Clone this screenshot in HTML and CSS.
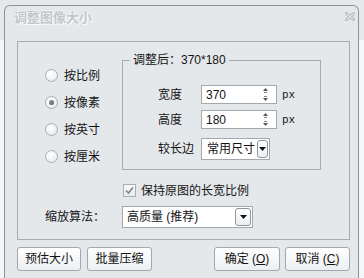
FILE: index.html
```html
<!DOCTYPE html>
<html lang="zh-CN">
<head>
<meta charset="utf-8">
<title>调整图像大小</title>
<link rel="stylesheet" href="styles.css">
</head>
<body>
<div class="window">
  <div class="titlebar">
    <span class="title">调整图像大小</span>
    <svg class="close" width="10" height="9" viewBox="0 0 10 9">
      <path d="M1.5 1.5 L8.5 7.5 M8.5 1.5 L1.5 7.5" stroke="#b9bdc1" stroke-width="3" stroke-linecap="square" fill="none"/>
      <path d="M1.5 1.5 L8.5 7.5 M8.5 1.5 L1.5 7.5" stroke="#f4f5f6" stroke-width="1" fill="none"/>
    </svg>
  </div>
  <div class="group">
    <div class="top">
      <div class="radios">
        <div class="radio"><span class="rb"></span><span>按比例</span></div>
        <div class="radio"><span class="rb on"></span><span>按像素</span></div>
        <div class="radio"><span class="rb"></span><span>按英寸</span></div>
        <div class="radio"><span class="rb"></span><span>按厘米</span></div>
      </div>
      <div class="after">
        <span class="legend">调整后：370*180</span>
        <div class="row">
          <span class="lbl">宽度</span>
          <div class="spin"><span class="val">370</span>
            <svg class="arrows" width="7" height="15" viewBox="0 0 7 15">
              <path d="M3.5 1 L6 4 L1 4 Z" fill="#555"/>
              <rect x="2" y="5" width="3" height="1" fill="#888"/>
              <rect x="2" y="9" width="3" height="1" fill="#888"/>
              <path d="M1 11 L6 11 L3.5 14 Z" fill="#555"/>
            </svg>
          </div>
          <span class="unit">px</span>
        </div>
        <div class="row r2">
          <span class="lbl">高度</span>
          <div class="spin"><span class="val">180</span>
            <svg class="arrows" width="7" height="15" viewBox="0 0 7 15">
              <path d="M3.5 1 L6 4 L1 4 Z" fill="#555"/>
              <rect x="2" y="5" width="3" height="1" fill="#888"/>
              <rect x="2" y="9" width="3" height="1" fill="#888"/>
              <path d="M1 11 L6 11 L3.5 14 Z" fill="#555"/>
            </svg>
          </div>
          <span class="unit">px</span>
        </div>
        <div class="row r3">
          <span class="lbl">较长边</span>
          <div class="select small"><span>常用尺寸</span>
            <span class="dd"><svg width="7" height="4" viewBox="0 0 7 4"><path d="M0 0 L7 0 L3.5 4 Z" fill="#111"/></svg></span>
          </div>
        </div>
      </div>
    </div>
    <div class="keep">
      <span class="cb"><svg width="11" height="11" viewBox="0 0 11 11"><path d="M2 5.5 L4.5 8 L9 2.5" stroke="#7c8896" stroke-width="1.6" fill="none"/></svg></span>
      <span>保持原图的长宽比例</span>
    </div>
    <div class="algo">
      <span class="algo-lbl">缩放算法：</span>
      <div class="select wide"><span>高质量 (推荐)</span>
        <span class="dd"><svg width="7" height="4" viewBox="0 0 7 4"><path d="M0 0 L7 0 L3.5 4 Z" fill="#111"/></svg></span>
      </div>
    </div>
  </div>
  <div class="buttons">
    <div class="btn b1">预估大小</div>
    <div class="btn b2">批量压缩</div>
    <div class="btn b3">确定 (<u>O</u>)</div>
    <div class="btn b4">取消 (<u>C</u>)</div>
  </div>
</div>
</body>
</html>
```
FILE: styles.css
```css
html, body {
  margin: 0;
  padding: 0;
}
body {
  width: 364px;
  height: 278px;
  overflow: hidden;
  background: linear-gradient(#e6e9ec 0, #e6e9ec 40px, #f5f6f7 40px);
  font-family: "Liberation Sans", "Noto Sans CJK SC", sans-serif;
  font-size: 12px;
  line-height: 14px;
  color: #141414;
}
.window {
  margin: 5px 0 0 4px;
  width: 355px;
  height: 273px;
  box-sizing: border-box;
  border: 1px solid #8d9398;
  border-bottom: none;
  border-radius: 6px 6px 0 0;
  background: #e5e8eb;
}
.titlebar {
  display: flex;
  justify-content: space-between;
  align-items: flex-start;
  height: 35px;
  box-sizing: border-box;
  padding: 4px 3px 0 9px;
}
.title {
  font-weight: bold;
  font-size: 13px;
  line-height: 15px;
  color: #c2c6ca;
  text-shadow: 1px 1px 0 #fbfcfd, 0 0 2px #ffffff;
}
.close {
  margin-top: 2px;
}
.group {
  margin-left: 12px;
  width: 333px;
  height: 199px;
  box-sizing: border-box;
  border: 1px solid #a7abaf;
}
.top {
  display: flex;
}
.radios {
  width: 104px;
  box-sizing: border-box;
  padding: 20px 0 0 27px;
  display: flex;
  flex-direction: column;
}
.radio {
  display: flex;
  align-items: center;
  gap: 6px;
  height: 27px;
}
.rb {
  position: relative;
  width: 13px;
  height: 13px;
  box-sizing: border-box;
  border-radius: 50%;
  border: 1px solid #a9aeb3;
  background: radial-gradient(circle at 40% 35%, #ffffff 0, #f3f4f5 45%, #dfe2e5 100%);
}
.rb.on::after {
  content: "";
  position: absolute;
  left: 3px;
  top: 3px;
  width: 5px;
  height: 5px;
  border-radius: 50%;
  background: radial-gradient(circle at 40% 35%, #8d9399, #4e545a);
}
.after {
  position: relative;
  margin-top: 18px;
  width: 199px;
  height: 110px;
  box-sizing: border-box;
  border: 1px solid #a7abaf;
  padding: 24px 0 0 35px;
  display: flex;
  flex-direction: column;
}
.legend {
  position: absolute;
  top: -8px;
  left: 7px;
  padding: 0 3px;
  background: #e5e8eb;
  line-height: 14px;
}
.row {
  display: flex;
  align-items: center;
}
.r2 {
  margin-top: 6px;
}
.r3 {
  margin-top: 9px;
}
.lbl {
  width: 43px;
}
.spin {
  width: 76px;
  height: 19px;
  box-sizing: border-box;
  border: 1px solid #a3a8ad;
  background: #fff;
  display: flex;
  align-items: center;
  justify-content: space-between;
  padding: 0 7px 0 4px;
}
.unit {
  margin-left: 5px;
  font-family: "Liberation Mono", monospace;
  font-size: 11px;
}
.select {
  display: flex;
  align-items: center;
  justify-content: space-between;
  height: 22px;
  box-sizing: border-box;
  border: 1px solid #a3a8ad;
  background: #fff;
  padding: 0 1px 0 5px;
}
.select.small {
  width: 69px;
}
.select.wide {
  width: 131px;
  padding-left: 4px;
}
.dd {
  display: flex;
  align-items: center;
  justify-content: center;
  width: 16px;
  height: 18px;
  box-sizing: border-box;
  border: 1px solid #8f959a;
  border-radius: 3px;
  background: linear-gradient(#ffffff, #eceef0);
}
.small .dd {
  width: 11px;
}
.keep {
  display: flex;
  align-items: center;
  gap: 5px;
  margin: 14px 0 0 105px;
  height: 13px;
}
.cb {
  display: flex;
  align-items: center;
  justify-content: center;
  width: 13px;
  height: 13px;
  box-sizing: border-box;
  border: 1px solid #a9aeb3;
  background: linear-gradient(#f7f8f9, #e9ebed);
}
.algo {
  display: flex;
  align-items: center;
  margin: 9px 0 0 27px;
}
.algo-lbl {
  width: 77px;
}
.buttons {
  display: flex;
  margin: 7px 0 0 12px;
}
.btn {
  display: flex;
  align-items: center;
  justify-content: center;
  height: 24px;
  box-sizing: border-box;
  border: 1px solid #a4a8ac;
  border-radius: 3px;
  background: linear-gradient(#ffffff, #f6f7f8 50%, #eceef0);
}
.btn u {
  text-underline-offset: 1px;
}
.b1 { width: 64px; }
.b2 { width: 65px; margin-left: 6px; }
.b3 { width: 66px; margin-left: 62px; }
.b4 { width: 65px; margin-left: 5px; }
```
